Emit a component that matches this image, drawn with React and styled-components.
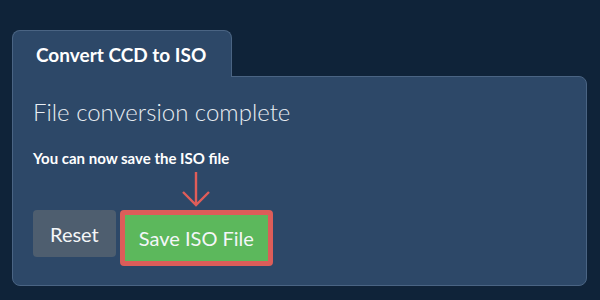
import styled, { createGlobalStyle } from 'styled-components'

const GlobalStyle = createGlobalStyle`
    html, body {
        margin: 0;
        padding: 0;
        background: #0f2339;
        font-family: Lato, "Open Sans", sans-serif;
        color: #ffffff;
    }
`

const Page = styled.div`
    width: 600px;
    height: 300px;
    box-sizing: border-box;
    padding: 30px 13px 0 12px;
`

const Tab = styled.div`
    position: relative;
    z-index: 1;
    width: 220px;
    height: 47px;
    box-sizing: border-box;
    margin-bottom: -1px;
    padding: 12px 0 0 23px;
    background: #2d4868;
    border: 1px solid #4a6483;
    border-bottom: none;
    border-radius: 8px 8px 0 0;
    font-size: 19px;
    font-weight: 700;
    line-height: 24px;
`

const Panel = styled.div`
    height: 210px;
    box-sizing: border-box;
    padding: 20px 21px 0 20px;
    background: #2d4868;
    border: 1px solid #4a6483;
    border-radius: 0 8px 8px 8px;
`

const Heading = styled.h2`
    margin: 0;
    font-size: 24px;
    font-weight: 300;
    line-height: 29px;
    color: #e8edf2;
`

const Note = styled.p`
    margin: 23px 0 0 0;
    font-size: 15px;
    font-weight: 700;
    line-height: 18px;
`

const Actions = styled.div`
    display: flex;
    align-items: flex-start;
    gap: 4px;
    margin-top: 43px;
`

const Button = styled.button`
    margin: 0;
    height: ${p => (p.$highlight ? '56px' : '47px')};
    box-sizing: border-box;
    padding: 0 ${p => (p.$highlight ? '14px' : '17px')};
    border: ${p => (p.$highlight ? '5px solid #dc5d59' : 'none')};
    border-radius: 4px;
    background: ${p => (p.$highlight ? '#5cb85c' : '#4e5e6f')};
    color: #f4f6f8;
    font-family: Lato, "Open Sans", sans-serif;
    font-size: 20px;
    font-weight: 400;
`

const Highlight = styled.div`
    position: relative;
`

const Pointer = styled.svg`
    position: absolute;
    left: 50%;
    bottom: 100%;
    margin-bottom: 3px;
    transform: translateX(-50%);
`

function App() {
    return (
        <>
            <GlobalStyle />
            <Page>
                <Tab>Convert CCD to ISO</Tab>
                <Panel>
                    <Heading>File conversion complete</Heading>
                    <Note>You can now save the ISO file</Note>
                    <Actions>
                        <Button>Reset</Button>
                        <Highlight>
                            <Pointer width="30" height="36" viewBox="0 0 30 36">
                                <path d="M15 1 V34 M2 21 L15 34 L28 21" fill="none" stroke="#e05d59" strokeWidth="2.4" />
                            </Pointer>
                            <Button $highlight>Save ISO File</Button>
                        </Highlight>
                    </Actions>
                </Panel>
            </Page>
        </>
    )
}

export default App
